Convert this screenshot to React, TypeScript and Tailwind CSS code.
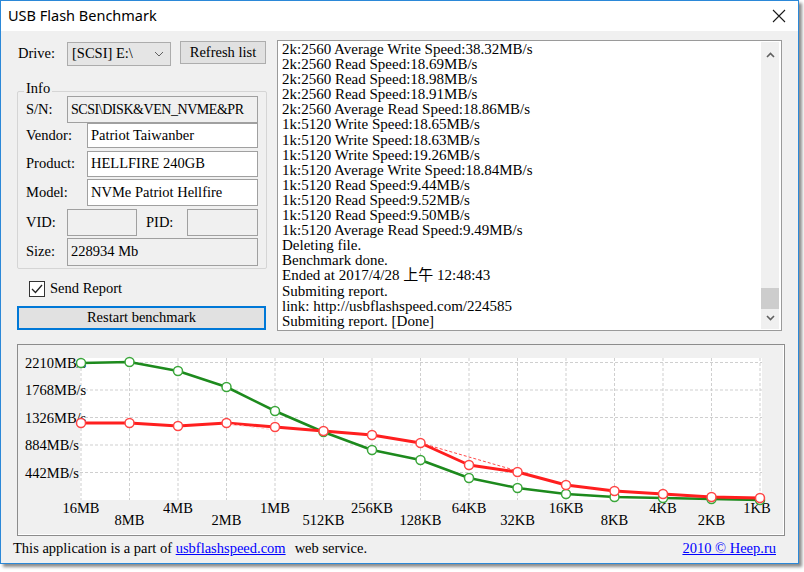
import React from "react";

const SERIF = "font-['Liberation_Serif','Noto_Sans_CJK_TC',serif]";

const logLines = [
  "2k:2560 Average Write Speed:38.32MB/s",
  "2k:2560 Read Speed:18.69MB/s",
  "2k:2560 Read Speed:18.98MB/s",
  "2k:2560 Read Speed:18.91MB/s",
  "2k:2560 Average Read Speed:18.86MB/s",
  "1k:5120 Write Speed:18.65MB/s",
  "1k:5120 Write Speed:18.63MB/s",
  "1k:5120 Write Speed:19.26MB/s",
  "1k:5120 Average Write Speed:18.84MB/s",
  "1k:5120 Read Speed:9.44MB/s",
  "1k:5120 Read Speed:9.52MB/s",
  "1k:5120 Read Speed:9.50MB/s",
  "1k:5120 Average Read Speed:9.49MB/s",
  "Deleting file.",
  "Benchmark done.",
  "Ended at 2017/4/28 上午 12:48:43",
  "Submiting report.",
  "link: http://usbflashspeed.com/224585",
  "Submiting report. [Done]",
];

const xLabels = ["16MB", "8MB", "4MB", "2MB", "1MB", "512KB", "256KB", "128KB", "64KB", "32KB", "16KB", "8KB", "4KB", "2KB", "1KB"];
const greenY = [363, 362, 371, 387, 411, 432, 450, 460, 478, 488, 494, 497, 498, 499, 500];
const redY = [423, 423, 426, 423, 427, 431, 435, 443, 465, 472, 485, 491, 494, 497, 498];
const yTicks = [
  { y: 17.5, t: "2210MB/s" },
  { y: 45, t: "1768MB/s" },
  { y: 72.5, t: "1326MB/s" },
  { y: 100, t: "884MB/s" },
  { y: 127.5, t: "442MB/s" },
];
const gx = (i: number) => 63 + 48.5 * i;
const gy = (Y: number) => Y - 345;

function Chart() {
  const gPts = greenY.map((y, i) => `${gx(i)},${gy(y)}`).join(" ");
  const rPts = redY.map((y, i) => `${gx(i)},${gy(y)}`).join(" ");
  return (
    <svg width="766" height="190" viewBox="0 0 766 190" className="block">
      <rect x="62" y="13" width="682" height="142" fill="#ffffff" />
      {xLabels.map((_, i) => (
        <line key={"v" + i} x1={gx(i)} y1="13" x2={gx(i)} y2="155" stroke="#cfcfcf" strokeWidth="1" strokeDasharray="3 2" />
      ))}
      {yTicks.map((t) => (
        <line key={"h" + t.y} x1="62" y1={t.y} x2="744" y2={t.y} stroke="#cfcfcf" strokeWidth="1" strokeDasharray="3 2" />
      ))}
      {yTicks.map((t) => (
        <text key={"t" + t.y} x="7" y={t.y + 5} fontSize="14.5" fill="#000" fontFamily="'Liberation Serif', serif">
          {t.t}
        </text>
      ))}
      {xLabels.map((l, i) => (
        <text
          key={"x" + i}
          x={i === 14 ? gx(i) - 3 : gx(i)}
          y={i % 2 === 0 ? 168 : 180}
          fontSize="14.5"
          textAnchor="middle"
          fill="#000"
          fontFamily="'Liberation Serif', serif"
        >
          {l}
        </text>
      ))}
      <polyline points={gPts} fill="none" stroke="#1d8a1d" strokeWidth="2.6" strokeLinejoin="round" />
      <polyline points={rPts} fill="none" stroke="#ff1f1f" strokeWidth="3" strokeLinejoin="round" />
      <line x1={gx(7)} y1={gy(443)} x2={gx(9)} y2={gy(471)} stroke="#ff4a4a" strokeWidth="1" strokeDasharray="3 2" />
      <line x1={gx(3)} y1={gy(424)} x2={gx(4)} y2={gy(430)} stroke="#ffd0d0" strokeWidth="1" strokeDasharray="3 2" />
      {greenY.map((y, i) => (
        <circle key={"g" + i} cx={gx(i)} cy={gy(y)} r="4.5" fill="#ffffff" stroke="#3aa63a" strokeWidth="1.5" />
      ))}
      {redY.map((y, i) => (
        <circle key={"r" + i} cx={gx(i)} cy={gy(y)} r="4.5" fill="#ffffff" stroke="#ff4545" strokeWidth="1.5" />
      ))}
    </svg>
  );
}

function Field({ value, white, className }: { value: string; white?: boolean; className: string }) {
  return (
    <div
      className={
        (white ? "bg-white " : "bg-[#f0f0f0] ") +
        "border border-[#a0a0a0] pl-[3px] flex items-center overflow-hidden whitespace-nowrap " +
        className
      }
    >
      {value}
    </div>
  );
}

export default function App() {
  return (
    <div className={"w-[804px] h-[572px] bg-white relative overflow-hidden text-black " + SERIF}>
      <div className="w-[799px] h-[564px] border border-[#2b88d8] bg-[#f0f0f0] flex flex-col shadow-[3px_3px_3px_rgba(0,0,0,0.45)]">
        {/* title bar */}
        <div className="h-[30px] bg-white flex items-center justify-between pl-[7px] pr-[12px] shrink-0">
          <span className="font-['Noto_Sans',sans-serif] text-[14.5px] text-black">USB Flash Benchmark</span>
          <svg width="14" height="14" viewBox="0 0 14 14">
            <path d="M1 1 L13 13 M13 1 L1 13" stroke="#1a1a1a" strokeWidth="1.1" />
          </svg>
        </div>

        {/* top section */}
        <div className="flex pl-[16px] mt-[9px] text-[14.5px]">
          {/* left column */}
          <div className="w-[250px] flex flex-col">
            <div className="flex items-start h-[25px] mt-[1px]">
              <div className="w-[50px] pl-[1px] leading-[25px]">Drive:</div>
              <div className="mt-[1px] w-[104px] h-[24px] bg-[#e5e5e5] border border-[#acacac] flex items-center justify-between pl-[4px] pr-[6px]">
                <span>[SCSI] E:\</span>
                <svg width="10" height="6" viewBox="0 0 10 6">
                  <path d="M1 1 L5 5 L9 1" fill="none" stroke="#606060" strokeWidth="1" />
                </svg>
              </div>
              <div className="ml-[9px] w-[86px] h-[23px] bg-[#e1e1e1] border border-[#adadad] flex items-center justify-center">
                Refresh list
              </div>
            </div>

            <div className="mt-[25px] h-[178px] border border-[#d5d5d5] rounded-[2px] relative pl-[8px] pr-[8px] pt-[4px] flex flex-col">
              <span className="absolute left-[6px] -top-[12px] bg-[#f0f0f0] px-[2px] leading-[16px]">Info</span>
              <div className="flex h-[27px]">
                <div className="w-[41px] flex items-center">S/N:</div>
                <Field value="SCSI\DISK&VEN_NVME&PR" className="flex-1 text-[14px] tracking-[-0.45px]" />
              </div>
              <div className="flex h-[25px]">
                <div className="w-[61px] flex items-center">Vendor:</div>
                <Field value="Patriot Taiwanber" white className="flex-1" />
              </div>
              <div className="flex h-[26px] mt-[3px]">
                <div className="w-[61px] flex items-center">Product:</div>
                <Field value="HELLFIRE 240GB" white className="flex-1" />
              </div>
              <div className="flex h-[27px] mt-[2px]">
                <div className="w-[61px] flex items-center">Model:</div>
                <Field value="NVMe Patriot Hellfire" white className="flex-1" />
              </div>
              <div className="flex h-[27px] mt-[3px]">
                <div className="w-[41px] flex items-center">VID:</div>
                <Field value="" className="w-[70px]" />
                <div className="ml-[9px] w-[41px] flex items-center">PID:</div>
                <Field value="" className="flex-1" />
              </div>
              <div className="flex h-[28px] mt-[2px]">
                <div className="w-[41px] flex items-center">Size:</div>
                <Field value="228934 Mb" className="flex-1" />
              </div>
            </div>

            <div className="mt-[11px] h-[17px] flex items-center pl-[12px]">
              <div className="w-[16px] h-[16px] border border-[#333333] bg-white flex items-center justify-center">
                <svg width="12" height="10" viewBox="0 0 12 10">
                  <path d="M1 5 L4.5 8.5 L11 1" fill="none" stroke="#222" strokeWidth="1.3" />
                </svg>
              </div>
              <span className="ml-[5px]">Send Report</span>
            </div>

            <div className="mt-[9px] w-[249px] h-[24px] border border-[#0078d7] bg-[#e1e1e1] flex items-center justify-center">
              <div className="w-full h-full border border-[#0078d7] flex items-center justify-center">Restart benchmark</div>
            </div>
          </div>

          {/* log box */}
          <div className="ml-[10px] w-[505px] h-[291px] border border-[#9a9a9a] bg-white flex px-[1px]">
            <div className="flex-1 pl-[3px] pt-[1px] leading-[15.1px] text-[15px] overflow-hidden whitespace-nowrap">
              {logLines.map((l, i) => (
                <div key={i}>{l}</div>
              ))}
            </div>
            <div className="w-[18px] my-[1px] bg-[#f0f0f0] mr-[1px] flex flex-col items-center">
              <div className="h-[20px] flex items-center justify-center pt-[6px]">
                <svg width="9" height="6" viewBox="0 0 9 6">
                  <path d="M1 5 L4.5 1.5 L8 5" fill="none" stroke="#606060" strokeWidth="1.6" />
                </svg>
              </div>
              <div className="flex-1" />
              <div className="w-[18px] h-[21px] bg-[#cdcdcd]" />
              <div className="h-[20px] flex items-center justify-center pb-[2px]">
                <svg width="9" height="6" viewBox="0 0 9 6">
                  <path d="M1 1 L4.5 4.5 L8 1" fill="none" stroke="#606060" strokeWidth="1.6" />
                </svg>
              </div>
            </div>
          </div>
        </div>

        {/* chart */}
        <div className="mt-[13px] ml-[16px] w-[768px] h-[192px] border border-[#8c8c8c] shadow-[inset_-1px_-1px_0_#ffffff]">
          <Chart />
        </div>

        {/* footer */}
        <div className="mt-[5px] pl-[12px] pr-[22px] flex justify-between text-[14.5px] leading-[15px]">
          <div>
            <span>This application is a part of </span>
            <span className="text-[#0000ff] underline">usbflashspeed.com</span>
            <span className="ml-[9px]">web service.</span>
          </div>
          <span className="text-[#0000ff] underline">2010 © Heep.ru</span>
        </div>
      </div>
    </div>
  );
}
